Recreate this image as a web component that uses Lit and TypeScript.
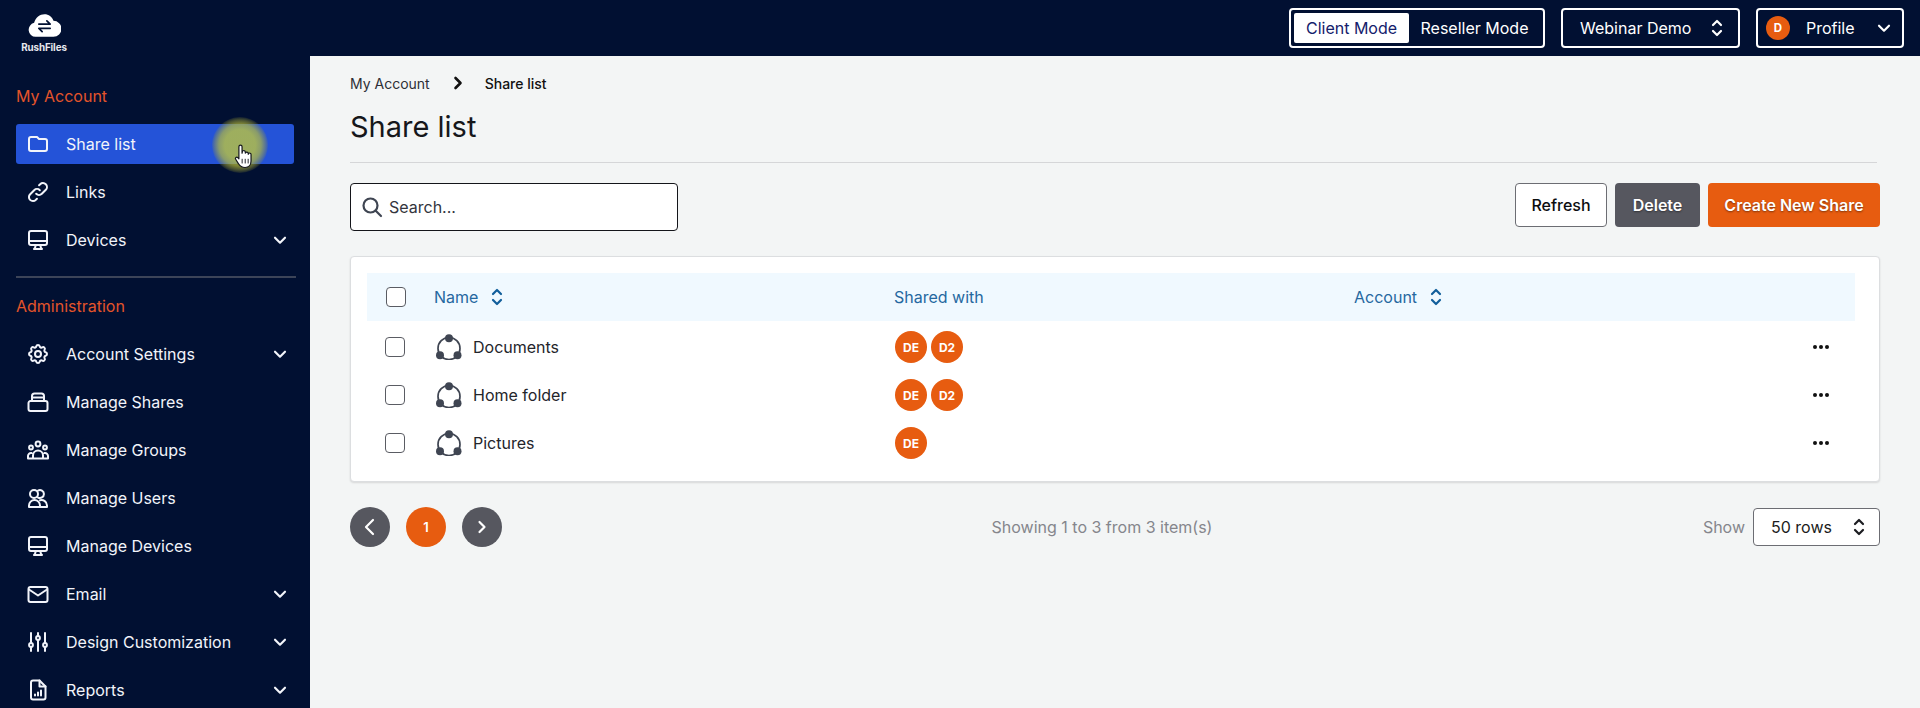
import { LitElement, html, css, svg } from "lit";
import { customElement } from "lit/decorators.js";

const ic = (body: unknown, w = 2) => html`<svg class="ic" viewBox="0 0 24 24" fill="none" stroke="currentColor" stroke-width=${w} stroke-linecap="round" stroke-linejoin="round">${body}</svg>`;

const icons: Record<string, unknown> = {
  folder: ic(svg`<path d="M3 7v10a2 2 0 002 2h14a2 2 0 002-2V9a2 2 0 00-2-2h-6l-2-2H5a2 2 0 00-2 2z"/>`),
  link: ic(svg`<path d="M13.828 10.172a4 4 0 00-5.656 0l-4 4a4 4 0 105.656 5.656l1.102-1.101m-.758-4.899a4 4 0 005.656 0l4-4a4 4 0 00-5.656-5.656l-1.1 1.1"/>`),
  desktop: ic(svg`<path d="M9.75 17L9 20l-1 1h8l-1-1-.75-3M3 13h18M5 17h14a2 2 0 002-2V5a2 2 0 00-2-2H5a2 2 0 00-2 2v10a2 2 0 002 2z"/>`),
  cog: ic(svg`<path d="M10.325 4.317c.426-1.756 2.924-1.756 3.35 0a1.724 1.724 0 002.573 1.066c1.543-.94 3.31.826 2.37 2.37a1.724 1.724 0 001.065 2.572c1.756.426 1.756 2.924 0 3.35a1.724 1.724 0 00-1.066 2.573c.94 1.543-.826 3.31-2.37 2.37a1.724 1.724 0 00-2.572 1.065c-.426 1.756-2.924 1.756-3.35 0a1.724 1.724 0 00-2.573-1.066c-1.543.94-3.31-.826-2.37-2.37a1.724 1.724 0 00-1.065-2.572c-1.756-.426-1.756-2.924 0-3.35a1.724 1.724 0 001.066-2.573c-.94-1.543.826-3.31 2.37-2.37.996.608 2.296.07 2.572-1.065z"/><path d="M15 12a3 3 0 11-6 0 3 3 0 016 0z"/>`),
  shares: ic(svg`<path d="M2.500 13a2 2 0 012-2h15a2 2 0 012 2v6a2 2 0 01-2 2h-15a2 2 0 01-2-2z"/><path d="M6 11V6a2.500 2.500 0 012.500-2.500h7A2.500 2.500 0 0118 6v5M6 7.500h12"/>`),
  groups: ic(svg`<circle cx="12" cy="6" r="2.400"/><circle cx="5" cy="9.500" r="1.900"/><circle cx="19" cy="9.500" r="1.900"/><path d="M7 20.500v-3a5 5 0 0110 0v3zM2 20.500v-2.500a3 3 0 013.500-3M22 20.500v-2.500a3 3 0 00-3.500-3M2 20.500h20"/>`),
  users: ic(svg`<circle cx="8" cy="8" r="4"/><path d="M12 4.500a4 4 0 110 7"/><path d="M3 21v-1.500a5.500 5.500 0 0111 0V21zM14 21h7v-1.500a5.500 5.500 0 00-7-5.200"/>`),
  mail: ic(svg`<rect x="2.500" y="5" width="19" height="15" rx="2"/><path d="M3 7.500L12 13.500l9-6"/>`),
  sliders: ic(svg`<path d="M5 3v9M5 17.500V21M12 3v2.500M12 10.500V21M19 3v9M19 17.500V21"/><circle cx="5" cy="15" r="1.900"/><circle cx="12" cy="8" r="1.900"/><circle cx="19" cy="15" r="1.900"/>`),
  report: ic(svg`<path d="M5 4.500A2 2 0 017 2.500h6.500L19.500 8.500V19.500a2 2 0 01-2 2H7a2 2 0 01-2-2z"/><path d="M13.500 2.500v6h6M9 17.500v-1M12 17.500v-3M15 17.500v-5"/>`),
};

const chevDown = html`<svg class="chev" viewBox="0 0 24 24" fill="none" stroke="currentColor" stroke-width="3.200" stroke-linecap="round" stroke-linejoin="round"><path d="M4.500 8.500L12 16l7.500-7.500"/></svg>`;
const updown = html`<svg class="updown" viewBox="0 0 12 20" fill="none" stroke="currentColor" stroke-width="2.200" stroke-linecap="round" stroke-linejoin="round"><path d="M2 7l4-4 4 4M2 13l4 4 4-4"/></svg>`;
const shareIcon = html`<svg class="share" viewBox="0 0 26 26" fill="none"><circle cx="13" cy="14.500" r="11" stroke="#3f4552" stroke-width="1.700"/><circle cx="13" cy="4.200" r="4" fill="#3f4552"/><circle cx="4" cy="21.300" r="4" fill="#3f4552"/><circle cx="21.500" cy="21.300" r="4" fill="#3f4552"/></svg>`;

type Item = { label: string; icon: string; more?: boolean; active?: boolean };
const account: Item[] = [
  { label: "Share list", icon: "folder", active: true },
  { label: "Links", icon: "link" },
  { label: "Devices", icon: "desktop", more: true },
];
const admin: Item[] = [
  { label: "Account Settings", icon: "cog", more: true },
  { label: "Manage Shares", icon: "shares" },
  { label: "Manage Groups", icon: "groups" },
  { label: "Manage Users", icon: "users" },
  { label: "Manage Devices", icon: "desktop" },
  { label: "Email", icon: "mail", more: true },
  { label: "Design Customization", icon: "sliders", more: true },
  { label: "Reports", icon: "report", more: true },
];
const rows = [
  { name: "Documents", who: ["DE", "D2"] },
  { name: "Home folder", who: ["DE", "D2"] },
  { name: "Pictures", who: ["DE"] },
];

@customElement("app-root")
export class AppRoot extends LitElement {
  static styles = css`
    :host { display: block; height: 708px; overflow: hidden; position: relative; background: #f3f5f5; font-family: Inter, "Liberation Sans", sans-serif; color: #1b1c20; }
    * { box-sizing: border-box; }
    .top { height: 56px; background: #011032; display: flex; align-items: center; padding-right: 16px; color: #fff; font-size: 16px; }
    .logo { margin-right: auto; align-self: stretch; padding: 14px 0 0 16px; display: flex; flex-direction: column; width: 72px; align-items: center; }
    .logo svg { width: 33px; height: 23px; display: block; flex: none; }
    .logo span { font-size: 9.800px; font-weight: 700; color: #e6e8ee; margin-top: 5px; line-height: 12px; letter-spacing: -0.100px; white-space: nowrap; }
    .box { height: 40px; border: 2px solid #fff; border-radius: 4px; display: flex; align-items: center; margin-left: 16px; }
    .modes { width: 256px; padding: 3px; }
    .mode { height: 30px; display: flex; align-items: center; justify-content: center; }
    .mode.on { width: 115px; background: #fff; color: #14206b; border-radius: 2px; }
    .mode.off { flex: 1; }
    .demo { width: 179px; padding: 0 15px 0 17px; justify-content: space-between; }
    .updown { width: 12px; height: 20px; display: block; flex: none; }
    .profile { width: 148px; padding: 0 10px 0 8px; }
    .dot { width: 24px; height: 24px; border-radius: 50%; background: #e75c10; font-size: 11.500px; font-weight: 700; display: flex; align-items: center; justify-content: center; margin-right: 16px; }
    .profile .chev { margin-left: auto; }
    .chev { width: 16px; height: 16px; display: block; flex: none; }
    .main { display: flex; height: 652px; }
    .side { width: 310px; flex: none; background: #011032; padding: 28px 16px 0; color: #fff; overflow: hidden; }
    .label { height: 24px; line-height: 24px; color: #e4542a; font-size: 16px; margin-bottom: 16px; }
    .nav { display: flex; flex-direction: column; gap: 8px; }
    .item { height: 40px; flex: none; border-radius: 3px; display: flex; align-items: center; padding: 0 6px 0 10px; font-size: 16px; color: #f2f4fa; }
    .item.active { background: #2453d8; }
    .ic { width: 24px; height: 24px; margin-right: 16px; flex: none; display: block; }
    .item .chev { margin-left: auto; }
    .rule { height: 2px; width: 280px; background: #3c4458; margin: 16px 0; }
    .content { flex: 1; padding: 17px 40px 0; min-width: 0; }
    .crumb { height: 20px; display: flex; align-items: center; font-size: 14px; color: #2d2f36; }
    .crumb svg { width: 10px; height: 14px; margin: 0 22px 0 23px; display: block; }
    .crumb b { font-weight: 500; color: #111; }
    h1 { margin: 14px 0 0; font-size: 29px; line-height: 40px; font-weight: 400; color: #16171b; }
    .hr { height: 1px; background: #d5d6d8; margin: 15px 3px 0 0; }
    .tools { display: flex; align-items: flex-start; margin-top: 20px; gap: 8px; }
    .search { width: 328px; height: 48px; background: #fff; border: 1.500px solid #14151a; border-radius: 4px; margin-right: auto; display: flex; align-items: center; padding: 0 9px; font-size: 16px; color: #33353d; gap: 5px; }
    .search svg { width: 24px; height: 24px; display: block; flex: none; }
    .btn { height: 44px; border-radius: 4px; display: flex; align-items: center; justify-content: center; font-size: 16px; }
    .refresh { width: 92px; background: #fff; border: 1px solid #6c6d73; font-weight: 500; color: #0c0d10; }
    .del { width: 85px; background: #56575f; color: #fff; font-weight: 600; text-shadow: 0 1px 2px rgba(0,0,0,.45); }
    .create { width: 172px; background: #e75c10; color: #fff; font-weight: 600; text-shadow: 0 1px 2px rgba(0,0,0,.45); }
    .card { margin-top: 25px; height: 226px; background: #fff; border: 1px solid #dcdee0; border-radius: 4px; padding: 16px 24px 0 16px; box-shadow: 0 1px 2px rgba(0,0,0,.12); }
    .row { display: grid; grid-template-columns: 67px 460px 460px 1fr 60px; align-items: center; height: 48px; }
    .thead { background: #f0f9ff; color: #25689f; font-size: 16px; margin-bottom: 2px; }
    .th { display: flex; align-items: center; gap: 13px; }
    .th .updown { color: #115e9b; }
    .cb { width: 20px; height: 20px; border: 1.500px solid #5a5c63; border-radius: 4px; background: #fff; margin-left: 18px; }
    .thead .cb { margin-left: 19px; }
    .nm { display: flex; align-items: center; font-size: 16px; color: #24252b; padding-left: 2px; }
    .share { width: 26px; height: 26px; margin-right: 11px; display: block; flex: none; }
    .av { display: flex; gap: 4px; padding-left: 1px; }
    .av span { width: 32px; height: 32px; border-radius: 50%; background: #e75c10; color: #fff; font-size: 12px; font-weight: 700; display: flex; align-items: center; justify-content: center; }
    .dots { display: flex; gap: 2px; justify-content: center; padding-right: 8px; }
    .dots i { width: 4px; height: 4px; border-radius: 50%; background: #111; display: block; }
    .pager { margin-top: 25px; display: grid; grid-template-columns: 1fr auto 1fr; align-items: center; height: 40px; }
    .pgs { display: flex; gap: 16px; }
    .pg { width: 40px; height: 40px; border-radius: 50%; background: #56575f; color: #fff; display: flex; align-items: center; justify-content: center; font-size: 13px; font-weight: 600; }
    .pg.cur { background: #e75c10; }
    .pg svg { width: 14px; height: 18px; display: block; }
    .info { font-size: 16px; color: #85868c; margin-right: 26px; }
    .show { display: flex; justify-content: flex-end; align-items: center; gap: 8px; font-size: 16px; color: #85868c; }
    .sel { width: 127px; height: 38px; background: #fff; border: 1px solid #6c6d73; border-radius: 4px; display: flex; align-items: center; justify-content: space-between; padding: 0 14px 0 17px; color: #1b1c20; }
    .glow { position: absolute; left: 212px; top: 117px; width: 56px; height: 56px; border-radius: 50%; background: radial-gradient(circle closest-side, rgba(192,200,60,.78) 0 55%, rgba(186,190,55,.68) 75%, rgba(170,170,50,.4) 90%, rgba(150,150,40,.12) 100%); pointer-events: none; }
    .hand { position: absolute; left: 234px; top: 144px; width: 20px; height: 25px; pointer-events: none; }
  `;

  private navItem(i: Item) {
    return html`<div class="item ${i.active ? "active" : ""}">${icons[i.icon]}<span>${i.label}</span>${i.more ? chevDown : ""}</div>`;
  }

  render() {
    return html`
      <header class="top">
        <div class="logo">
          <svg viewBox="0 0 35 24"><path fill="#fff" d="M8 24a7.500 7.500 0 01-1.500-14.800C8 3.500 12.500 0 17.500 0c4.500 0 8 2.500 9.500 7a8.500 8.500 0 010 17z"/><path fill="none" stroke="#011032" stroke-width="1.800" stroke-linecap="round" stroke-linejoin="round" d="M11.500 10.500h12M20 7l3.500 3.500M23.500 15h-12M15 18.500L11.500 15"/></svg>
          <span>RushFiles</span>
        </div>
        <div class="box modes"><div class="mode on">Client Mode</div><div class="mode off">Reseller Mode</div></div>
        <div class="box demo"><span>Webinar Demo</span>${updown}</div>
        <div class="box profile"><div class="dot">D</div><span>Profile</span>${chevDown}</div>
      </header>
      <div class="main">
        <aside class="side">
          <div class="label">My Account</div>
          <nav class="nav">${account.map((i) => this.navItem(i))}</nav>
          <div class="rule"></div>
          <div class="label">Administration</div>
          <nav class="nav">${admin.map((i) => this.navItem(i))}</nav>
        </aside>
        <main class="content">
          <div class="crumb"><span>My Account</span><svg viewBox="0 0 10 14" fill="none" stroke="#111" stroke-width="2.600" stroke-linecap="round" stroke-linejoin="round"><path d="M2.500 2l5 5-5 5"/></svg><b>Share list</b></div>
          <h1>Share list</h1>
          <div class="hr"></div>
          <div class="tools">
            <div class="search"><svg viewBox="0 0 24 24" fill="none" stroke="#3f4552" stroke-width="2.200" stroke-linecap="round"><circle cx="10.500" cy="10.500" r="7"/><path d="M15.500 15.500L21 21"/></svg><span>Search...</span></div>
            <div class="btn refresh">Refresh</div>
            <div class="btn del">Delete</div>
            <div class="btn create">Create New Share</div>
          </div>
          <section class="card">
            <div class="row thead">
              <div class="cb"></div>
              <div class="th"><span>Name</span>${updown}</div>
              <div class="th"><span>Shared with</span></div>
              <div class="th"><span>Account</span>${updown}</div>
              <div></div>
            </div>
            ${rows.map((r) => html`
              <div class="row">
                <div class="cb"></div>
                <div class="nm">${shareIcon}<span>${r.name}</span></div>
                <div class="av">${r.who.map((w) => html`<span>${w}</span>`)}</div>
                <div></div>
                <div class="dots"><i></i><i></i><i></i></div>
              </div>`)}
          </section>
          <div class="pager">
            <div class="pgs">
              <div class="pg"><svg viewBox="0 0 14 18" fill="none" stroke="#fff" stroke-width="2.200" stroke-linecap="round" stroke-linejoin="round"><path d="M10 2L3 9l7 7"/></svg></div>
              <div class="pg cur">1</div>
              <div class="pg"><svg viewBox="0 0 14 18" fill="none" stroke="#fff" stroke-width="2.200" stroke-linecap="round" stroke-linejoin="round"><path d="M4.500 4l5 5-5 5"/></svg></div>
            </div>
            <div class="info">Showing 1 to 3 from 3 item(s)</div>
            <div class="show"><span>Show</span><div class="sel"><span>50 rows</span>${updown}</div></div>
          </div>
        </main>
      </div>
      <div class="glow"></div>
      <svg class="hand" viewBox="0 0 21 27"><path fill="#fff" stroke="#14161c" stroke-width="1.300" stroke-linejoin="round" d="M5 3a1.700 1.700 0 013.400 0v7l.3-1.500a1.600 1.600 0 013.200.300l.1 1a1.600 1.600 0 013.100.300v1a1.500 1.500 0 013 .300v7c0 4-2.500 7-6.500 7-4 0-5.500-1.500-7-4L1.500 16.500c-1-1.500 1-3 2.300-1.800L5 16z"/><path stroke="#14161c" stroke-width="1" d="M8.500 16v5M11.800 16v5M15 16v5"/></svg>
    `;
  }
}
